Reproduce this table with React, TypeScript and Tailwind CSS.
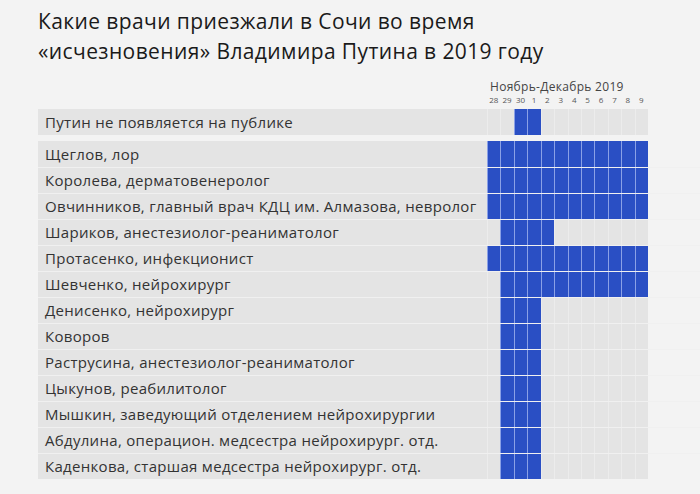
const days = ['28', '29', '30', '1', '2', '3', '4', '5', '6', '7', '8', '9'];

type Row = { name: string; from: number; to: number };

const putin: Row = { name: 'Путин не появляется на публике', from: 2, to: 3 };

const doctors: Row[] = [
  { name: 'Щеглов, лор', from: 0, to: 11 },
  { name: 'Королева, дерматовенеролог', from: 0, to: 11 },
  { name: 'Овчинников, главный врач КДЦ им. Алмазова, невролог', from: 0, to: 11 },
  { name: 'Шариков, анестезиолог-реаниматолог', from: 1, to: 4 },
  { name: 'Протасенко, инфекционист', from: 0, to: 11 },
  { name: 'Шевченко, нейрохирург', from: 1, to: 11 },
  { name: 'Денисенко, нейрохирург', from: 1, to: 3 },
  { name: 'Коворов', from: 1, to: 3 },
  { name: 'Раструсина, анестезиолог-реаниматолог', from: 1, to: 3 },
  { name: 'Цыкунов, реабилитолог', from: 1, to: 3 },
  { name: 'Мышкин, заведующий отделением нейрохирургии', from: 1, to: 3 },
  { name: 'Абдулина, операцион. медсестра нейрохирург. отд.', from: 1, to: 3 },
  { name: 'Каденкова, старшая медсестра нейрохирург. отд.', from: 1, to: 3 },
];

function ChartRow({ row, first }: { row: Row; first?: boolean }) {
  return (
    <div className={`flex h-[26px] ${first ? '' : 'border-t border-[#f0f0f0]'}`}>
      <div className="w-[449px] bg-[#e4e4e4] pl-[7px] flex items-center text-[15px] tracking-[0.3px] text-[#333]">
        {row.name}
      </div>
      <div className="w-[161px] grid grid-cols-12">
        {days.map((d, i) => {
          const on = i >= row.from && i <= row.to;
          return (
            <div
              key={d}
              className={`border-l ${on ? 'bg-[#2a4fc4] border-[#8aa0e6]' : 'bg-[#e4e4e4] border-[#ececec]'}`}
            />
          );
        })}
      </div>
    </div>
  );
}

export default function App() {
  return (
    <div className="w-[700px] h-[494px] bg-[#f3f3f3] pl-[38px] pt-[6px] font-['Open_Sans',sans-serif]">
      <h1 className="text-[21px] leading-[30px] tracking-[0.4px] text-[#1a1a1a]">
        Какие врачи приезжали в Сочи во время
        <br />
        «исчезновения» Владимира Путина в 2019 году
      </h1>

      <div className="flex mt-[14px]">
        <div className="w-[449px]" />
        <div className="w-[161px]">
          <div className="text-[12px] leading-[14px] tracking-[0.3px] text-[#444] pl-[3px]">Ноябрь-Декабрь 2019</div>
          <div className="grid grid-cols-12 mt-px">
            {days.map((d) => (
              <div key={d} className="text-center text-[8px] leading-[10px] text-[#555]">
                {d}
              </div>
            ))}
          </div>
        </div>
      </div>

      <div className="mt-[4px]">
        <ChartRow row={putin} first />
      </div>

      <div className="mt-[6px]">
        {doctors.map((r, i) => (
          <ChartRow key={r.name} row={r} first={i === 0} />
        ))}
      </div>
    </div>
  );
}
